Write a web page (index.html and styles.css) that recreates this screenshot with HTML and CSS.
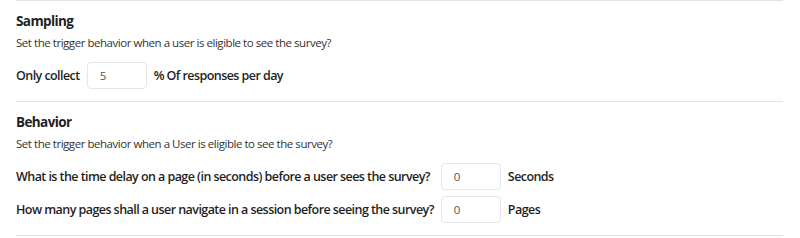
FILE: index.html
```html
<!DOCTYPE html>
<html lang="en">
<head>
    <meta charset="UTF-8">
    <meta name="viewport" content="width=device-width, initial-scale=1.0">
    <title>Survey Settings</title>
    <link rel="stylesheet" href="styles.css">
</head>
<body>
    <div class="settings">
        <div class="section">
            <h3 class="section-title">Sampling</h3>
            <p class="section-desc">Set the trigger behavior when a user is eligible to see the survey?</p>
            <div class="field-grid">
                <label class="field-label" for="sample-rate">Only collect</label>
                <input class="field-input" id="sample-rate" type="text" value="5">
                <span class="field-unit">% Of responses per day</span>
            </div>
        </div>

        <div class="section">
            <h3 class="section-title">Behavior</h3>
            <p class="section-desc">Set the trigger behavior when a User is eligible to see the survey?</p>
            <div class="field-grid">
                <label class="field-label" for="delay">What is the time delay on a page (in seconds) before a user sees the survey?</label>
                <input class="field-input" id="delay" type="text" value="0">
                <span class="field-unit">Seconds</span>

                <label class="field-label" for="pages">How many pages shall a user navigate in a session before seeing the survey?</label>
                <input class="field-input" id="pages" type="text" value="0">
                <span class="field-unit">Pages</span>
            </div>
        </div>
    </div>
</body>
</html>
```

FILE: styles.css
```css
body {
    font-family: 'Open Sans', 'Liberation Sans', sans-serif;
    background: #ffffff;
    color: #222;
    margin: 0;
}

.settings {
    width: 767px;
    margin-left: 16px;
    border-top: 1px solid #e2e2e2;
}

.section {
    padding: 10px 0 12px;
    border-bottom: 1px solid #e2e2e2;
}

.section-title {
    margin: 0;
    font-size: 13.5px;
    line-height: 20px;
    font-weight: 700;
    letter-spacing: -0.6px;
    color: #1f1f1f;
}

.section-desc {
    margin: 3px 0 10px;
    font-size: 11.5px;
    line-height: 18px;
    letter-spacing: -0.46px;
    color: #333;
}

.field-grid {
    display: grid;
    grid-template-columns: auto 60px auto;
    justify-content: start;
    align-items: center;
    column-gap: 7px;
    row-gap: 6px;
}

.field-label,
.field-unit {
    font-size: 12.5px;
    font-weight: 600;
    letter-spacing: -0.56px;
    color: #1f1f1f;
}

.field-input {
    width: 60px;
    height: 27px;
    box-sizing: border-box;
    padding: 0 12px;
    border: 1px solid #e4e4ea;
    border-radius: 4px;
    font-family: inherit;
    font-size: 11.5px;
    color: #555;
    outline: none;
}
```
